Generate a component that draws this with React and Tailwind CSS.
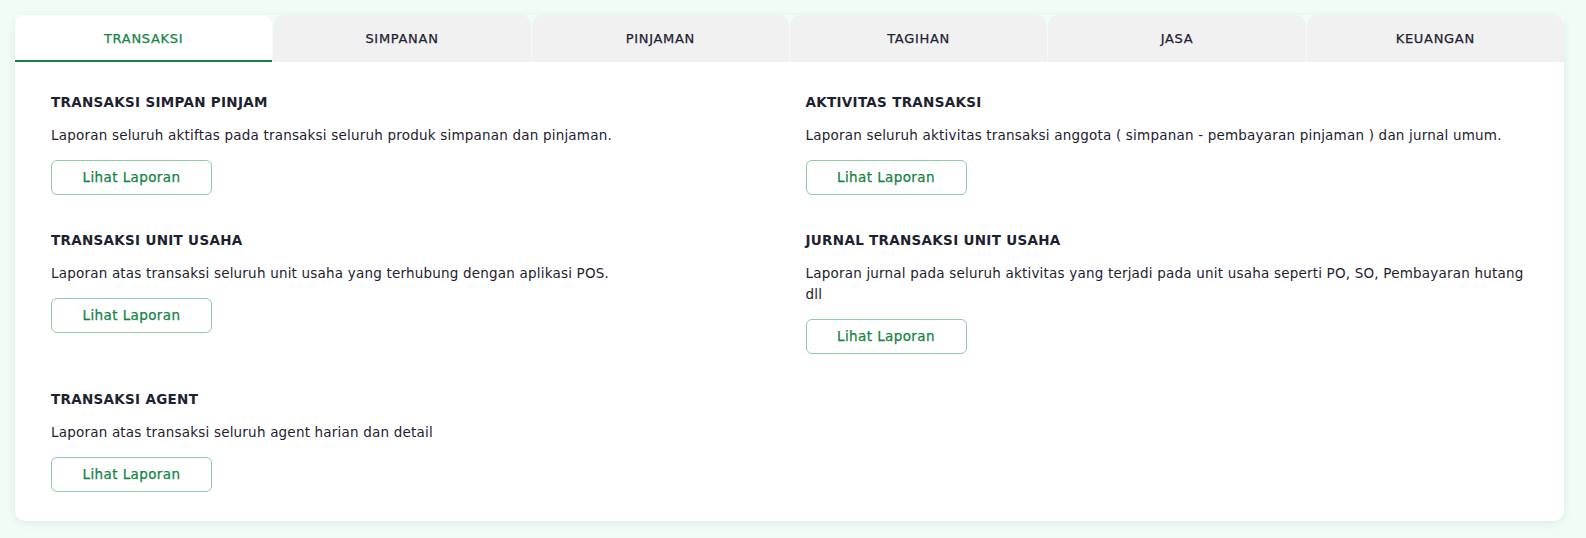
import React from "react";

const tabs = ["TRANSAKSI", "SIMPANAN", "PINJAMAN", "TAGIHAN", "JASA", "KEUANGAN"];

const reports = [
    {
        title: "TRANSAKSI SIMPAN PINJAM",
        desc: "Laporan seluruh aktiftas pada transaksi seluruh produk simpanan dan pinjaman.",
    },
    {
        title: "AKTIVITAS TRANSAKSI",
        desc: "Laporan seluruh aktivitas transaksi anggota ( simpanan - pembayaran pinjaman ) dan jurnal umum.",
    },
    {
        title: "TRANSAKSI UNIT USAHA",
        desc: "Laporan atas transaksi seluruh unit usaha yang terhubung dengan aplikasi POS.",
    },
    {
        title: "JURNAL TRANSAKSI UNIT USAHA",
        desc: "Laporan jurnal pada seluruh aktivitas yang terjadi pada unit usaha seperti PO, SO, Pembayaran hutang dll",
    },
    {
        title: "TRANSAKSI AGENT",
        desc: "Laporan atas transaksi seluruh agent harian dan detail",
    },
];

export default function App() {
    const active = "TRANSAKSI";

    return (
        <div className="min-h-screen bg-[#f1fcf6] pt-[15px] pl-[15px] font-['DejaVu_Sans',sans-serif] text-[#1e2230]">
            <div className="w-[1549px] rounded-[10px] bg-white shadow-[0_2px_10px_rgba(0,40,20,0.08)]">
                {/* tabs */}
                <div className="flex gap-px bg-[#f1fcf6]">
                    {tabs.map((tab) => {
                        const isActive = tab === active;
                        return (
                            <button
                                key={tab}
                                className={`h-[47px] flex-1 rounded-t-[10px] text-[13px] tracking-[0.7px] [-webkit-text-stroke:0.25px] ${isActive
                                    ? "border-b-2 border-[#138442] bg-white pt-[2px] text-[#138442]"
                                    : "bg-[#f1f1f1] text-[#1e2230]"
                                    }`}
                            >
                                {tab}
                            </button>
                        );
                    })}
                </div>

                {/* reports */}
                <div className="grid grid-cols-2 gap-x-[32px] gap-y-[35px] px-9 pt-[30px] pb-[29px]">
                    {reports.map((r) => (
                        <div key={r.title}>
                            <h3 className="text-[13.5px] leading-5 font-bold tracking-[0.3px]">{r.title}</h3>
                            <p className="mt-[13px] text-[13.5px] leading-[21px] tracking-[0.2px]">{r.desc}</p>
                            <button className="mt-[14px] h-[35px] w-[161px] rounded-[6px] border border-[#8fcaa5] text-[13.5px] tracking-[0.4px] text-[#138442] [-webkit-text-stroke:0.25px]">
                                Lihat Laporan
                            </button>
                        </div>
                    ))}
                </div>
            </div>
        </div>
    );
}
